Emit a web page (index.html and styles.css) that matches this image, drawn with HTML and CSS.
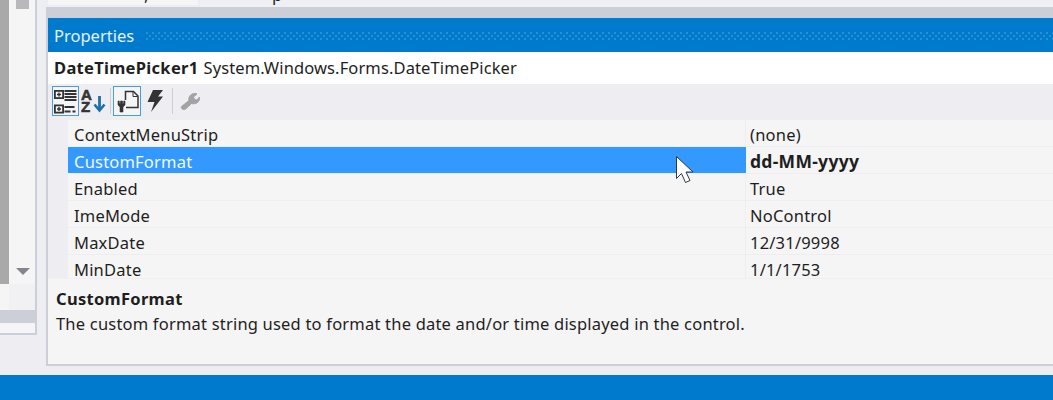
FILE: index.html
```html
<!DOCTYPE html>
<html lang="en">
<head>
<meta charset="utf-8">
<title>Properties</title>
<link rel="stylesheet" href="styles.css">
</head>
<body>
<div class="main">
  <aside class="left">
    <div class="left-body">
      <div class="thumb-col"><div class="thumb"></div></div>
      <div class="scroll-col">
        <div class="scroll-top"><div class="scroll-knob"></div></div>
        <div class="scroll-track"><div class="scroll-arrow"></div></div>
        <div class="scroll-end"></div>
      </div>
    </div>
    <div class="left-band"></div>
    <div class="left-foot"></div>
  </aside>
  <section class="right">
    <div class="tabs">
      <div class="tab tab-active"><span class="tab-text">,</span></div>
      <div class="tab tab-idle"><span class="tab-text">p</span></div>
    </div>
    <div class="tab-gap"></div>
    <div class="panel">
      <header class="title">
        <span class="title-text">Properties</span>
        <span class="grip"></span>
      </header>
      <div class="object"><b>DateTimePicker1</b> <span>System.Windows.Forms.DateTimePicker</span></div>
      <div class="toolbar">
        <button class="tool on first">
          <svg width="25" height="28" viewBox="0 0 25 28"><g fill="none" stroke="#333" stroke-width="1.800"><rect x="1.900" y="3.900" width="8.200" height="7.200"/><rect x="1.900" y="18.400" width="8.200" height="7.200"/></g><path d="M4 7.500h4M6 5.500v4M4 22h4M6 20v4" stroke="#333" stroke-width="1.400"/><path d="M11.500 4h12M11.500 7h12M11.500 10h12M11.500 13h12M11.500 20h10M11.500 24.500h6M19.500 24.500h3" stroke="#333" stroke-width="2"/></svg>
        </button>
        <div class="tool az">
          <svg width="25" height="28" viewBox="0 0 25 28"><text x="0" y="13" class="az-letter">A</text><text x="0" y="24.500" class="az-letter">Z</text><path d="M18.500 9v14" stroke="#1c6fa8" stroke-width="2.800"/><path d="M13.500 17.500l5 6 5-6" fill="none" stroke="#1c6fa8" stroke-width="2.600"/></svg>
        </div>
        <i class="sep"></i>
        <button class="tool on second">
          <svg width="26" height="28" viewBox="0 0 26 28"><path d="M11.500 13V4.500h8l4.500 4.500V20.500H12" fill="none" stroke="#333" stroke-width="1.500"/><path d="M19 5v4.500h4.500" fill="none" stroke="#333" stroke-width="1"/><path d="M4 14v4l2 2v5h3v-5l2-2v-4l-1.300 0v2.500h-1.200v-2.500h-2v2.500h-1.200v-2.500z" fill="#333" stroke="#333" stroke-width=".6"/></svg>
        </button>
        <div class="tool bolt">
          <svg width="18" height="24" viewBox="0 0 18 24"><path d="M7 1h10l-5 6.500h5L5 23l3.500-10H1.500z" fill="#333"/></svg>
        </div>
        <i class="sep sep2"></i>
        <div class="tool wrench">
          <svg width="20" height="18" viewBox="0 0 20 18"><path d="M1.500 14.500L9 8.500C8.300 5 10.500 1.500 15 1.500c1 0 1.700.2 2 .4L13.500 5l1 2.500 2.500 .5 2.500-3c.5 3.500-1.500 6.500-5.500 6.800-1 0-1.700-.1-2.400-.4L5 17.500c-1.500 1-4.500-1-3.500-3z" fill="#a3a3a3" stroke="#a3a3a3" stroke-width="1"/></svg>
        </div>
      </div>
      <div class="grid">
        <div class="row"><div class="name">ContextMenuStrip</div><div class="value">(none)</div></div>
        <div class="row selected"><div class="name">CustomFormat</div><div class="value strong">dd-MM-yyyy</div></div>
        <div class="row"><div class="name">Enabled</div><div class="value">True</div></div>
        <div class="row"><div class="name">ImeMode</div><div class="value">NoControl</div></div>
        <div class="row"><div class="name">MaxDate</div><div class="value">12/31/9998</div></div>
        <div class="row"><div class="name">MinDate</div><div class="value">1/1/1753</div></div>
      </div>
      <div class="desc">
        <div class="desc-title">CustomFormat</div>
        <div class="desc-text">The custom format string used to format the date and/or time displayed in the control.</div>
      </div>
    </div>
  </section>
</div>
<footer class="status"></footer>
<svg class="cursor" width="20" height="30" viewBox="0 0 20 30"><path d="M1.500 1.500V23.500L6.500 18.500L10.500 27.500L15 25.500L11 17H18z" fill="#fff" stroke="#2b3a4a" stroke-width="1"/></svg>
</body>
</html>
```
FILE: styles.css
```css
* { box-sizing: border-box; }
html, body { margin: 0; padding: 0; }
body {
  width: 1053px;
  height: 400px;
  overflow: hidden;
  display: flex;
  flex-direction: column;
  background: #eeeef2;
  color: #1e1e1e;
  font-family: "Noto Sans", "Liberation Sans", sans-serif;
  font-size: 16.500px;
  letter-spacing: .2px;
  position: relative;
}
.main { flex: 1; display: flex; min-height: 0; }
.status { height: 25px; background: #007acc; flex: none; }

.left {
  width: 37px;
  height: 335px;
  flex: none;
  border-right: 2px solid #ccced8;
  border-bottom: 2px solid #ccced8;
  display: flex;
  flex-direction: column;
}
.left-body { height: 310px; display: flex; flex: none; }
.thumb-col { width: 9px; background: #f5f5f5; }
.thumb { height: 284px; background: #a9a9a9; }
.scroll-col { flex: 1; display: flex; flex-direction: column; background: #f5f5f5; }
.scroll-top { height: 262px; padding-left: 7px; }
.scroll-knob { width: 13px; height: 9px; background: #b9b9bd; }
.scroll-track { height: 22px; padding: 6px 0 0 7px; }
.scroll-arrow {
  width: 0; height: 0;
  border-left: 7px solid transparent;
  border-right: 7px solid transparent;
  border-top: 7px solid #85858f;
}
.scroll-end { flex: 1; background: #f1f1f3; }
.left-band { height: 13px; background: #ccced8; }
.left-foot { flex: 1; background: #f5f5f5; }

.right { flex: 1; min-width: 0; margin-left: 9px; display: flex; flex-direction: column; height: 366px; }
.tabs { height: 7px; display: flex; padding-left: 2px; gap: 2px; flex: none; }
.tab { overflow: hidden; line-height: 20px; }
.tab-text { display: block; margin-top: -15px; }
.tab-active { width: 150px; height: 5px; background: #f5f5f5; padding-left: 96px; }
.tab-idle { flex: 1; height: 7px; background: #f0f0f4; padding-left: 72px; }
.tab-gap { height: 11px; background: #ccced8; flex: none; }

.panel {
  flex: 1;
  min-height: 0;
  display: flex;
  flex-direction: column;
  border-left: 2px solid #ccced8;
  border-bottom: 2px solid #ccced8;
  background: #f5f5f5;
}
.title {
  height: 34px;
  flex: none;
  background: #007acc;
  display: flex;
  align-items: center;
  padding-left: 6px;
  color: #e4f1fa;
  font-size: 16.500px;
  letter-spacing: 0;
}
.grip {
  flex: 1;
  height: 8px;
  margin-left: 12px;
  margin-top: 1px;
  background:
    repeating-linear-gradient(90deg, #2b8fd4 0 2px, transparent 2px 6px) 0 0 / 100% 2px no-repeat,
    repeating-linear-gradient(90deg, transparent 0 3px, #2b8fd4 3px 5px, transparent 5px 6px) 0 3px / 100% 2px no-repeat,
    repeating-linear-gradient(90deg, #2b8fd4 0 2px, transparent 2px 6px) 0 6px / 100% 2px no-repeat;
}
.object {
  height: 32px;
  flex: none;
  background: #fff;
  padding: 0 0 1px 6px;
  display: flex;
  align-items: center;
  gap: 5px;
  white-space: nowrap;
  letter-spacing: .12px;
}
.object b { font-weight: 700; letter-spacing: .3px; }
.toolbar { height: 36px; flex: none; background: #eeeef2; display: flex; align-items: flex-start; padding-top: 2px; }
.tool {
  padding: 0;
  background: none;
  border: 0;
  display: flex;
  align-items: center;
  justify-content: center;
  height: 30px;
}
.tool.on { border: 1px solid #4a9ee0; background: #f5f5f8; width: 28px; }
.tool.first { margin-left: 4px; width: 27px; }
.az { width: 25px; margin-left: 2px; }
.az-letter { font-family: "Liberation Sans", sans-serif; font-weight: 700; font-size: 15px; letter-spacing: 0; fill: #333; stroke: #333; stroke-width: .6px; }
.sep { width: 1px; height: 26px; background: #ccced8; margin: 2px 2px 0 4px; }
.bolt { width: 18px; margin-left: 5px; }
.sep2 { margin: 2px 7px 0 8px; }
.wrench { width: 20px; }
.grid { flex: 1; min-height: 0; overflow: hidden; padding-left: 20px; background: linear-gradient(90deg, #eeeef2 20px, #f5f5f5 20px); }
.row { height: 27px; display: flex; border-bottom: 1px solid #eeeef0; }
.name { width: 678px; flex: none; padding-left: 6px; line-height: 29px; border-right: 1px solid #eeeef0; }
.value { flex: 1; padding-left: 4px; line-height: 29px; }
.strong { font-weight: 700; font-size: 17.500px; letter-spacing: .3px; }
.selected .name { background: #3399ff; color: #f4f9ff; height: 26px; border-right: 0; }
.desc { height: 86px; flex: none; padding: 9px 8px; border-top: 1px solid #f0f0f2; }
.desc-title { font-weight: 700; line-height: 22px; letter-spacing: .3px; }
.desc-text { line-height: 27px; white-space: nowrap; }
.cursor { position: absolute; left: 675px; top: 155px; }
```
